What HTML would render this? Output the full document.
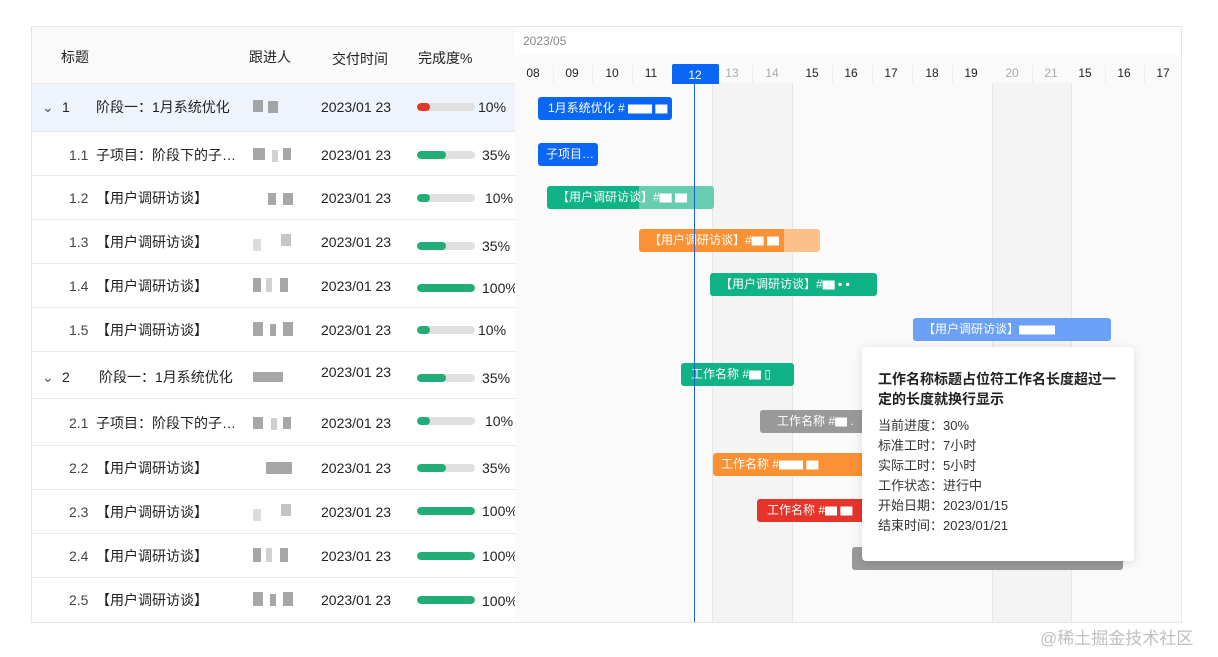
<!DOCTYPE html>
<html><head><meta charset="utf-8"><style>
*{margin:0;padding:0;box-sizing:border-box}
body{width:1218px;height:657px;background:#fff;position:relative;overflow:hidden;font-family:"Liberation Sans","Noto Sans CJK SC",sans-serif;color:#222}
.a{position:absolute}
.t{position:absolute;font-size:14px;line-height:16px;white-space:nowrap}
.hl{position:absolute;left:32px;width:483px;height:1px;background:#e8e8e8}
.pb{position:absolute;left:417px;width:58px;height:8px;border-radius:4px;background:#e0e0e0;overflow:hidden}
.pb i{display:block;height:8px;border-radius:4px;background:#22ad77}
.av{position:absolute;height:12px;background:#8a8a8a;opacity:.75}
.bar{position:absolute;height:23px;border-radius:3px;color:#fff;font-size:12px;line-height:23px;padding-left:10px;white-space:nowrap;overflow:hidden}
.day{position:absolute;top:66px;font-size:12px;color:#222;width:40px;text-align:center}
.vl{position:absolute;top:83px;width:1px;height:539px;background:#e6e6e6}
</style></head><body>
<div class="a" style="left:31px;top:26px;width:1151px;height:597px;border:1px solid #e6e6e6"></div>
<div class="a" style="left:32px;top:27px;width:483px;height:56px;background:#fafafa"></div>
<div class="t" style="left:61px;top:49px">标题</div>
<div class="t" style="left:249px;top:49px">跟进人</div>
<div class="t" style="left:332px;top:51px">交付时间</div>
<div class="t" style="left:418px;top:50px">完成度%</div>
<div class="a" style="left:32px;top:83px;width:483px;height:48px;background:#eef3fc"></div>
<div class="hl" style="top:83px"></div><div class="hl" style="top:131px"></div><div class="hl" style="top:175px"></div><div class="hl" style="top:219px"></div><div class="hl" style="top:263px"></div><div class="hl" style="top:307px"></div><div class="hl" style="top:351px"></div><div class="hl" style="top:398px"></div><div class="hl" style="top:445px"></div><div class="hl" style="top:489px"></div><div class="hl" style="top:533px"></div><div class="hl" style="top:577px"></div>

<div class="t" style="left:42px;top:99px;color:#555">⌄</div><div class="t" style="left:62px;top:99px">1</div><div class="t" style="left:96px;top:99px">阶段一：1月系统优化</div>
<div class="av" style="left:253px;top:100px;width:10px"></div><div class="av" style="left:268px;top:101px;width:10px"></div>
<div class="t" style="left:321px;top:99px">2023/01 23</div><div class="pb" style="top:103px"><i style="width:13px;background:#e0372a"></i></div><div class="t" style="left:478px;top:99px">10%</div>

<div class="t" style="left:69px;top:147px;color:#444">1.1</div><div class="t" style="left:96px;top:147px">子项目：阶段下的子…</div>
<div class="av" style="left:253px;top:148px;width:12px"></div><div class="av" style="left:272px;top:150px;width:6px;opacity:.4"></div><div class="av" style="left:283px;top:148px;width:8px"></div>
<div class="t" style="left:321px;top:147px">2023/01 23</div><div class="pb" style="top:151px"><i style="width:29px"></i></div><div class="t" style="left:482px;top:147px">35%</div>

<div class="t" style="left:69px;top:190px;color:#444">1.2</div><div class="t" style="left:96px;top:190px">【用户调研访谈】</div>
<div class="av" style="left:268px;top:193px;width:8px"></div><div class="av" style="left:283px;top:193px;width:10px"></div>
<div class="t" style="left:321px;top:190px">2023/01 23</div><div class="pb" style="top:194px"><i style="width:13px"></i></div><div class="t" style="left:485px;top:190px">10%</div>

<div class="t" style="left:69px;top:234px;color:#444">1.3</div><div class="t" style="left:96px;top:234px">【用户调研访谈】</div>
<div class="av" style="left:253px;top:239px;width:8px;opacity:.3"></div><div class="av" style="left:281px;top:234px;width:10px;opacity:.5"></div>
<div class="t" style="left:321px;top:234px">2023/01 23</div><div class="pb" style="top:242px"><i style="width:29px"></i></div><div class="t" style="left:482px;top:238px">35%</div>

<div class="t" style="left:69px;top:278px;color:#444">1.4</div><div class="t" style="left:96px;top:278px">【用户调研访谈】</div>
<div class="av" style="left:253px;top:278px;width:8px;height:14px"></div><div class="av" style="left:266px;top:278px;width:6px;height:14px;opacity:.4"></div><div class="av" style="left:280px;top:278px;width:8px;height:14px"></div>
<div class="t" style="left:321px;top:278px">2023/01 23</div><div class="pb" style="top:284px"><i style="width:58px"></i></div><div class="t" style="left:482px;top:280px">100%</div>

<div class="t" style="left:69px;top:322px;color:#444">1.5</div><div class="t" style="left:96px;top:322px">【用户调研访谈】</div>
<div class="av" style="left:253px;top:322px;width:10px;height:14px"></div><div class="av" style="left:270px;top:324px;width:6px"></div><div class="av" style="left:283px;top:322px;width:10px;height:14px"></div>
<div class="t" style="left:321px;top:322px">2023/01 23</div><div class="pb" style="top:326px"><i style="width:13px"></i></div><div class="t" style="left:478px;top:322px">10%</div>

<div class="t" style="left:42px;top:369px;color:#555">⌄</div><div class="t" style="left:62px;top:369px">2</div><div class="t" style="left:99px;top:369px">阶段一：1月系统优化</div>
<div class="av" style="left:253px;top:372px;width:30px;height:10px"></div>
<div class="t" style="left:321px;top:364px">2023/01 23</div><div class="pb" style="top:374px"><i style="width:29px"></i></div><div class="t" style="left:482px;top:370px">35%</div>

<div class="t" style="left:69px;top:415px;color:#444">2.1</div><div class="t" style="left:96px;top:415px">子项目：阶段下的子…</div>
<div class="av" style="left:253px;top:417px;width:10px"></div><div class="av" style="left:271px;top:418px;width:6px;opacity:.4"></div><div class="av" style="left:283px;top:417px;width:8px"></div>
<div class="t" style="left:321px;top:415px">2023/01 23</div><div class="pb" style="top:417px"><i style="width:13px"></i></div><div class="t" style="left:485px;top:413px">10%</div>

<div class="t" style="left:69px;top:460px;color:#444">2.2</div><div class="t" style="left:96px;top:460px">【用户调研访谈】</div>
<div class="av" style="left:266px;top:462px;width:26px"></div>
<div class="t" style="left:321px;top:460px">2023/01 23</div><div class="pb" style="top:464px"><i style="width:29px"></i></div><div class="t" style="left:482px;top:460px">35%</div>

<div class="t" style="left:69px;top:504px;color:#444">2.3</div><div class="t" style="left:96px;top:504px">【用户调研访谈】</div>
<div class="av" style="left:253px;top:509px;width:8px;opacity:.3"></div><div class="av" style="left:281px;top:504px;width:10px;opacity:.5"></div>
<div class="t" style="left:321px;top:504px">2023/01 23</div><div class="pb" style="top:507px"><i style="width:58px"></i></div><div class="t" style="left:482px;top:503px">100%</div>

<div class="t" style="left:69px;top:548px;color:#444">2.4</div><div class="t" style="left:96px;top:548px">【用户调研访谈】</div>
<div class="av" style="left:253px;top:548px;width:8px;height:14px"></div><div class="av" style="left:266px;top:548px;width:6px;height:14px;opacity:.4"></div><div class="av" style="left:280px;top:548px;width:8px;height:14px"></div>
<div class="t" style="left:321px;top:548px">2023/01 23</div><div class="pb" style="top:552px"><i style="width:58px"></i></div><div class="t" style="left:482px;top:548px">100%</div>

<div class="t" style="left:69px;top:592px;color:#444">2.5</div><div class="t" style="left:96px;top:592px">【用户调研访谈】</div>
<div class="av" style="left:253px;top:592px;width:10px;height:14px"></div><div class="av" style="left:270px;top:594px;width:6px"></div><div class="av" style="left:283px;top:592px;width:10px;height:14px"></div>
<div class="t" style="left:321px;top:592px">2023/01 23</div><div class="pb" style="top:596px"><i style="width:58px"></i></div><div class="t" style="left:482px;top:593px">100%</div>

<div class="a" style="left:515px;top:27px;width:666px;height:595px;background:#fafafb"></div>
<div class="a" style="left:515px;top:27px;width:666px;height:28px;background:#fff"></div>
<div class="t" style="left:523px;top:33px;font-size:12px;color:#888">2023/05</div>
<div class="a" style="left:712px;top:83px;width:80px;height:539px;background:#f4f4f5"></div>
<div class="a" style="left:992px;top:83px;width:79px;height:539px;background:#f4f4f5"></div>
<div class="vl" style="left:712px"></div><div class="vl" style="left:792px"></div><div class="vl" style="left:992px"></div><div class="vl" style="left:1071px"></div>
<div class="a" style="left:672px;top:64px;width:47px;height:20px;background:#0a66f5;border-radius:2px 2px 0 0"></div>
<div class="day" style="left:513px">08</div><div class="day" style="left:552px">09</div><div class="day" style="left:592px">10</div><div class="day" style="left:631px">11</div>
<div class="day" style="left:675px;color:#fff;top:68px">12</div>
<div class="day" style="left:712px;color:#aaa">13</div><div class="day" style="left:752px;color:#aaa">14</div><div class="day" style="left:792px">15</div><div class="day" style="left:831px">16</div><div class="day" style="left:871px">17</div><div class="day" style="left:912px">18</div><div class="day" style="left:951px">19</div><div class="day" style="left:992px;color:#aaa">20</div><div class="day" style="left:1031px;color:#aaa">21</div><div class="day" style="left:1065px">15</div><div class="day" style="left:1104px">16</div><div class="day" style="left:1143px">17</div>
<div class="a" style="left:553px;top:65px;width:1px;height:18px;background:#eee"></div><div class="a" style="left:592px;top:65px;width:1px;height:18px;background:#eee"></div><div class="a" style="left:632px;top:65px;width:1px;height:18px;background:#eee"></div><div class="a" style="left:752px;top:65px;width:1px;height:18px;background:#eee"></div><div class="a" style="left:832px;top:65px;width:1px;height:18px;background:#eee"></div><div class="a" style="left:872px;top:65px;width:1px;height:18px;background:#eee"></div><div class="a" style="left:912px;top:65px;width:1px;height:18px;background:#eee"></div><div class="a" style="left:952px;top:65px;width:1px;height:18px;background:#eee"></div><div class="a" style="left:1032px;top:65px;width:1px;height:18px;background:#eee"></div><div class="a" style="left:1105px;top:65px;width:1px;height:18px;background:#eee"></div><div class="a" style="left:1144px;top:65px;width:1px;height:18px;background:#eee"></div>

<div class="bar" style="left:538px;top:97px;width:134px;background:#0a66f5">1月系统优化 # ▆▆ ▆</div>
<div class="bar" style="left:538px;top:143px;width:60px;background:#0a66f5;padding-left:8px">子项目…</div>
<div class="bar" style="left:547px;top:186px;width:167px;background:linear-gradient(90deg,#10b386 0 55%,#67cdb0 55%)">【用户调研访谈】#▆ ▆</div>
<div class="bar" style="left:639px;top:229px;width:181px;background:linear-gradient(90deg,#fa9135 0 80%,#fcc08a 80%)">【用户调研访谈】#▆ ▆</div>
<div class="bar" style="left:710px;top:273px;width:167px;background:#10b386">【用户调研访谈】#▆  ▪ ▪</div>
<div class="bar" style="left:913px;top:318px;width:198px;background:#6aa1f7">【用户调研访谈】▆▆▆</div>
<div class="bar" style="left:681px;top:363px;width:113px;background:#10b386">工作名称 #▆  ▯</div>
<div class="bar" style="left:760px;top:410px;width:110px;background:#999;padding-left:17px">工作名称 #▆ .</div>
<div class="bar" style="left:713px;top:453px;width:157px;background:#fa9135;padding-left:8px">工作名称 #▆▆ ▆</div>
<div class="bar" style="left:757px;top:499px;width:113px;background:#e5342a">工作名称 #▆ ▆</div>
<div class="bar" style="left:852px;top:547px;width:271px;background:#999"></div>
<div class="a" style="left:694px;top:83px;width:1px;height:539px;background:#1a5fd0"></div>
<div class="a" style="left:862px;top:347px;width:272px;height:214px;background:#fff;border-radius:4px;box-shadow:0 2px 10px rgba(0,0,0,.12)"></div>
<div class="t" style="left:878px;top:369px;font-weight:bold;line-height:20px;font-size:14px;width:245px;white-space:normal">工作名称标题占位符工作名长度超过一定的长度就换行显示</div>
<div class="t" style="left:878px;top:416px;font-size:13px;line-height:20px;white-space:pre;color:#333">当前进度：30%
标准工时：7小时
实际工时：5小时
工作状态：进行中
开始日期：2023/01/15
结束时间：2023/01/21</div>
<div class="t" style="left:1040px;top:629px;font-size:17px;line-height:20px;color:#c0c0c0">@稀土掘金技术社区</div>
</body></html>
